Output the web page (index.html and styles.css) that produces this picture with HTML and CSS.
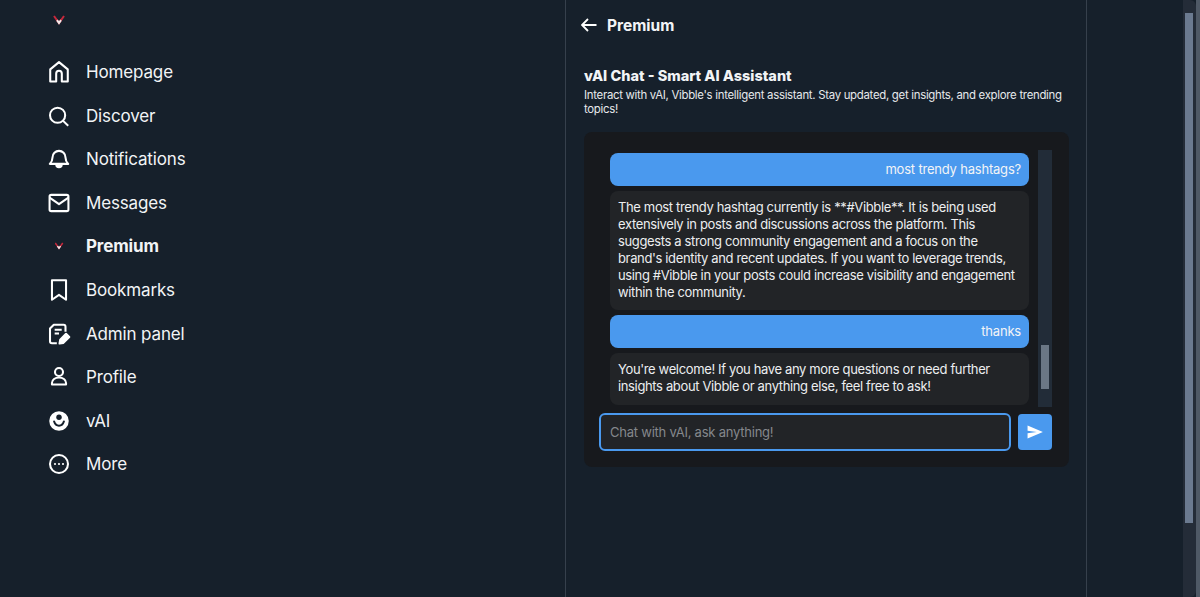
FILE: index.html
```html
<!DOCTYPE html>
<html lang="en">
<head>
<meta charset="utf-8">
<title>Premium</title>
<link rel="stylesheet" href="styles.css">
</head>
<body>
<div class="app">
  <aside class="sidebar">
    <svg class="logo" viewBox="0 0 12 10" width="12" height="10"><path d="M1 1 L6 8 L11 1" stroke="#c8283c" stroke-width="2" fill="none"/><path d="M4 5.200 L6 8 L8 5.200" stroke="#f3e9ea" stroke-width="2" fill="none"/></svg>
    <nav class="nav">
      <a class="item"><svg class="ico" viewBox="0 0 24 24"><path d="M3.900 9.600 12 2.900l8.100 6.700v11.100h-5.500v-7.200a2.600 2.600 0 0 0-5.200 0v7.200H3.900z"/></svg><span>Homepage</span></a>
      <a class="item"><svg class="ico" viewBox="0 0 24 24"><circle cx="10.700" cy="11.300" r="7"/><path d="M15.800 16.500 20.500 21"/></svg><span>Discover</span></a>
      <a class="item"><svg class="ico" viewBox="0 0 24 24"><path d="M12 4.500a6 6 0 0 0-6 6c0 3-1 4.500-2.500 6h17c-1.500-1.500-2.500-3-2.500-6a6 6 0 0 0-6-6z"/><path d="M9.500 17a2.500 2.500 0 0 0 5 0z" fill="#fff"/></svg><span>Notifications</span></a>
      <a class="item"><svg class="ico" viewBox="0 0 24 24"><rect x="3.300" y="4.500" width="17.400" height="15" rx="1.500"/><path d="M3.300 7 12 13l8.700-6"/></svg><span>Messages</span></a>
      <a class="item strong"><svg class="ico-logo" viewBox="0 0 12 10" width="9" height="8"><path d="M1 1 L6 8 L11 1" stroke="#c8283c" stroke-width="2" fill="none"/><path d="M4 5.200 L6 8 L8 5.200" stroke="#f3e9ea" stroke-width="2" fill="none"/></svg><span>Premium</span></a>
      <a class="item"><svg class="ico" viewBox="0 0 24 24"><path d="M5.500 3h13v18L12 16.500 5.500 21z"/></svg><span>Bookmarks</span></a>
      <a class="item"><svg class="ico" viewBox="0 0 24 24"><path d="M10 20.500H5.500a1.800 1.800 0 0 1-1.800-1.800V7l3.500-3.500h9a1.800 1.800 0 0 1 1.800 1.800V10"/><path d="M8 8h6.500M8 11.500h4"/><path d="M12.500 20.800l.6-3.600 5.400-5.400 3 3-5.400 5.400z" fill="#fff"/></svg><span>Admin panel</span></a>
      <a class="item"><svg class="ico" viewBox="0 0 24 24"><circle cx="12" cy="7.400" r="3.700"/><path d="M5.500 19v-1.500c0-3 3-5 6.500-5s6.500 2 6.500 5V19z"/></svg><span>Profile</span></a>
      <a class="item"><svg class="ico" viewBox="0 0 24 24"><circle cx="12" cy="12" r="9" fill="#fff" stroke="none"/><circle cx="12" cy="8.500" r="2.500" fill="#16202b" stroke="none"/><path d="M7.500 12.500c.8 2.500 2.500 3.800 4.500 3.800s3.700-1.300 4.500-3.800" stroke="#16202b" stroke-linecap="round"/></svg><span>vAI</span></a>
      <a class="item"><svg class="ico" viewBox="0 0 24 24"><circle cx="12" cy="12" r="8.300"/><circle cx="8.300" cy="12" r="1" fill="#fff" stroke="none"/><circle cx="12" cy="12" r="1" fill="#fff" stroke="none"/><circle cx="15.700" cy="12" r="1" fill="#fff" stroke="none"/></svg><span>More</span></a>
    </nav>
  </aside>
  <main class="main">
    <header class="head">
      <svg class="back" viewBox="0 0 16 14" width="16" height="14"><path d="M15.500 7H1M7 1 1 7l6 6"/></svg>
      <h1 class="title">Premium</h1>
    </header>
    <section class="content">
      <h2 class="subtitle">vAI Chat - Smart AI Assistant</h2>
      <p class="desc">Interact with vAI, Vibble's intelligent assistant. Stay updated, get insights, and explore trending topics!</p>
      <div class="chat">
        <div class="scroller">
          <div class="messages">
            <div class="msg user">most trendy hashtags?</div>
            <div class="msg bot">The most trendy hashtag currently is **#Vibble**. It is being used extensively in posts and discussions across the platform. This suggests a strong community engagement and a focus on the brand's identity and recent updates. If you want to leverage trends, using #Vibble in your posts could increase visibility and engagement within the community.</div>
            <div class="msg user">thanks</div>
            <div class="msg bot">You're welcome! If you have any more questions or need further insights about Vibble or anything else, feel free to ask!</div>
          </div>
          <div class="chat-track"><div class="chat-thumb"></div></div>
        </div>
        <div class="composer">
          <div class="input">Chat with vAI, ask anything!</div>
          <button class="send" type="button"><svg viewBox="0 0 18 16" width="16" height="14"><path d="M0.500 0.500 18 8 0.500 15.500 0.500 9.500 11 8 0.500 6.500z" fill="#fff"/></svg></button>
        </div>
      </div>
    </section>
  </main>
  <div class="gutter"></div>
  <div class="page-scroll"><div class="page-track"><div class="page-thumb"></div></div></div>
</div>
</body>
</html>
```
FILE: styles.css
```css
* { box-sizing: border-box; }
html, body { margin: 0; height: 100%; overflow: hidden; }
body { background: #16202b; color: #f2f4f6; font-family: Inter, "Liberation Sans", sans-serif; }
.app { display: flex; height: 597px; }
.sidebar { width: 566px; flex: none; border-right: 1px solid #36404c; padding: 15px 0 0 46px; }
.logo { display: block; margin-left: 6.500px; }
.nav { display: flex; flex-direction: column; margin-top: 25.300px; }
.item { display: flex; align-items: center; height: 43.600px; gap: 14px; font-size: 17px; letter-spacing: -0.15px; color: #f2f4f6; }
.item.strong { font-weight: 700; }
.ico { width: 26px; height: 26px; flex: none; fill: none; stroke: #fff; stroke-width: 1.900; stroke-linejoin: round; }
.ico-logo { width: 26px; flex: none; padding: 0 8.500px; }
.main { width: 521px; flex: none; border-right: 1px solid #36404c; }
.head { display: flex; align-items: center; height: 50px; padding-left: 15px; gap: 10px; }
.back { fill: none; stroke: #fff; stroke-width: 1.800; }
.title { margin: 0; font-size: 15.500px; font-weight: 700; }
.content { padding: 17px 17px 0 18px; }
.subtitle { margin: 0; font-size: 14.500px; line-height: 18px; font-weight: 800; }
.desc { margin: 3px 0 0; font-size: 11.400px; letter-spacing: -0.29px; line-height: 14px; color: #e6e9ec; }
.chat { margin-top: 16px; height: 335px; background: #17191d; border-radius: 8px; padding: 18px 17px 16px 15px; }
.scroller { display: flex; height: 257px; gap: 9px; padding-left: 11px; overflow: hidden; }
.messages { flex: 1; min-width: 0; display: flex; flex-direction: column; gap: 5px; padding-top: 3px; }
.msg { border-radius: 8px; padding: 8px 8px 9px; font-size: 13px; letter-spacing: -0.36px; line-height: 17px; }
.user { background: #4a99ee; text-align: right; height: 33px; letter-spacing: -0.2px; }
.bot { background: #222427; color: #eceef0; }
.bot:last-child { padding-bottom: 10px; }
.chat-track { width: 14px; flex: none; background: #222c38; padding: 195px 3px 0; }
.chat-thumb { height: 44px; background: #6b7785; }
.composer { display: flex; gap: 7px; margin-top: 6px; align-items: center; }
.input { flex: 1; height: 38px; background: #222427; border: 2px solid #4a99ee; border-radius: 6px; padding: 0 9px; display: flex; align-items: center; font-size: 13px; letter-spacing: -0.23px; color: #85888c; }
.send { width: 34px; height: 36px; border: 0; border-radius: 4px; background: #4a99ee; padding: 0; display: flex; align-items: center; justify-content: center; }
.gutter { flex: 1; }
.page-scroll { width: 17px; flex: none; display: flex; border-right: 4px solid #4f5966; }
.page-track { width: 13px; background: #242c38; border-radius: 0 6px 6px 0; padding: 13px 3px 0 2px; }
.page-thumb { height: 510px; background: #6b7a90; }
```
